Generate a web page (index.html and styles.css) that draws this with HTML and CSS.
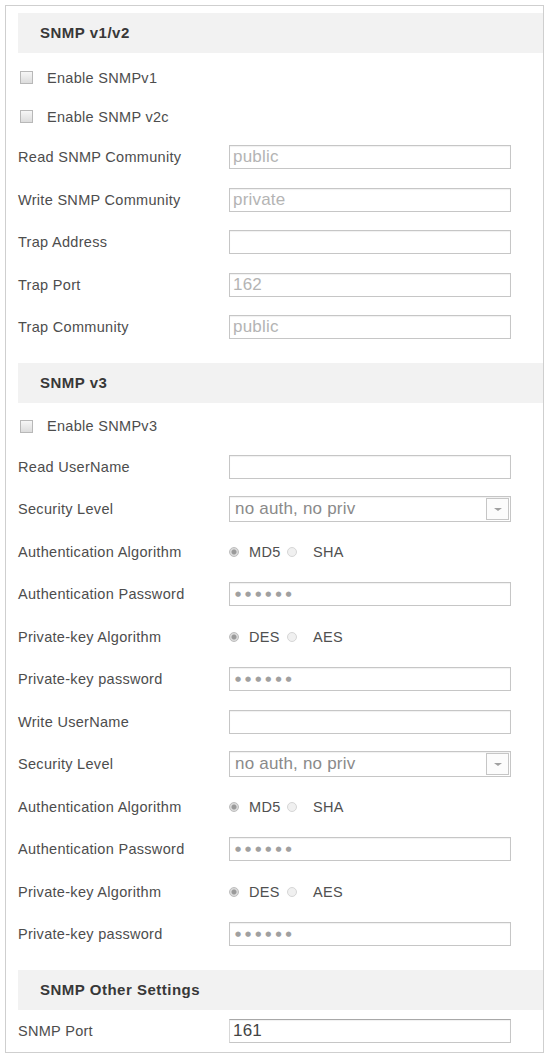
FILE: index.html
```html
<!DOCTYPE html>
<html lang="en">
<head>
    <meta charset="UTF-8">
    <meta name="viewport" content="width=device-width, initial-scale=1.0">
    <title>SNMP</title>
    <link rel="stylesheet" href="styles.css">
</head>
<body>
    <div class="panel">
        <div class="section-title first">SNMP v1/v2</div>
        <div class="check-row"><span class="checkbox"></span><span>Enable SNMPv1</span></div>
        <div class="check-row"><span class="checkbox"></span><span>Enable SNMP v2c</span></div>
        <div class="row"><label>Read SNMP Community</label><div class="field hint">public</div></div>
        <div class="row"><label>Write SNMP Community</label><div class="field hint">private</div></div>
        <div class="row"><label>Trap Address</label><div class="field"></div></div>
        <div class="row"><label>Trap Port</label><div class="field hint">162</div></div>
        <div class="row"><label>Trap Community</label><div class="field hint">public</div></div>

        <div class="section-title">SNMP v3</div>
        <div class="check-row"><span class="checkbox"></span><span>Enable SNMPv3</span></div>
        <div class="row"><label>Read UserName</label><div class="field"></div></div>
        <div class="row"><label>Security Level</label><div class="field select"><span>no auth, no priv</span><span class="arrow"></span></div></div>
        <div class="row"><label>Authentication Algorithm</label><div class="radios"><span class="option"><span class="radio on"></span>MD5</span><span class="option"><span class="radio"></span>SHA</span></div></div>
        <div class="row"><label>Authentication Password</label><div class="field dots">●●●●●●</div></div>
        <div class="row"><label>Private-key Algorithm</label><div class="radios"><span class="option"><span class="radio on"></span>DES</span><span class="option"><span class="radio"></span>AES</span></div></div>
        <div class="row"><label>Private-key password</label><div class="field dots">●●●●●●</div></div>
        <div class="row"><label>Write UserName</label><div class="field"></div></div>
        <div class="row"><label>Security Level</label><div class="field select"><span>no auth, no priv</span><span class="arrow"></span></div></div>
        <div class="row"><label>Authentication Algorithm</label><div class="radios"><span class="option"><span class="radio on"></span>MD5</span><span class="option"><span class="radio"></span>SHA</span></div></div>
        <div class="row"><label>Authentication Password</label><div class="field dots">●●●●●●</div></div>
        <div class="row"><label>Private-key Algorithm</label><div class="radios"><span class="option"><span class="radio on"></span>DES</span><span class="option"><span class="radio"></span>AES</span></div></div>
        <div class="row"><label>Private-key password</label><div class="field dots">●●●●●●</div></div>

        <div class="section-title flush">SNMP Other Settings</div>
        <div class="row last"><label>SNMP Port</label><div class="field value">161</div></div>
    </div>
</body>
</html>
```

FILE: styles.css
```css
body {
    margin: 0;
    font-family: "Liberation Sans", Arial, sans-serif;
    font-size: 14.5px;
    letter-spacing: 0.3px;
    color: #4d4d4d;
    background: #fff;
}

.panel {
    margin: 5px 0 0 5px;
    width: 539px;
    box-sizing: border-box;
    border: 1px solid #cfcfcf;
    padding: 7px 0 0 12px;
}

.section-title {
    height: 40px;
    line-height: 40px;
    background: #f2f2f2;
    padding-left: 22px;
    font-size: 15px;
    font-weight: bold;
    letter-spacing: 0.5px;
    color: #383838;
    margin-bottom: 4px;
}

.section-title.first {
    margin-bottom: 5px;
}

.row + .section-title {
    margin-top: 14px;
}

.section-title.flush {
    margin-bottom: 0;
}

.check-row {
    height: 39px;
    display: flex;
    align-items: center;
    gap: 14px;
    padding-left: 2px;
}

.checkbox {
    width: 11px;
    height: 11px;
    border: 1px solid #b8b8b8;
    background: linear-gradient(#f6f6f6, #dcdcdc);
}

.row {
    height: 42.5px;
    display: flex;
    align-items: center;
}

.row.last {
    height: 42px;
}

.row label {
    width: 211px;
    flex: none;
}

.field {
    width: 282px;
    height: 24px;
    box-sizing: border-box;
    border: 1px solid #c6c6c6;
    box-shadow: inset 0 1px 1px rgba(0, 0, 0, 0.06);
    padding: 0 3px;
    line-height: 22px;
    font-size: 17px;
    letter-spacing: 0.2px;
}

.hint {
    color: #b4b4b4;
}

.value {
    color: #444;
    border-top-color: #a8a8a8;
    border-left-color: #d8d8d8;
}

.dots {
    font-family: "DejaVu Sans", sans-serif;
    color: #a0a0a0;
    font-size: 7px;
    letter-spacing: 4px;
    padding-left: 5px;
}

.select {
    height: 26px;
    display: flex;
    align-items: center;
    justify-content: space-between;
    color: #8a8a8a;
    padding: 0 1px 0 5px;
}

.arrow {
    width: 23px;
    height: 22px;
    box-sizing: border-box;
    border: 1px solid #c6c6c6;
    background: #fcfcfc;
    position: relative;
}

.arrow::after {
    content: "";
    position: absolute;
    left: 7px;
    top: 9px;
    border-left: 4px solid transparent;
    border-right: 4px solid transparent;
    border-top: 3px solid #a0a0a0;
}

.radios {
    display: flex;
    align-items: center;
    color: #505050;
}

.option {
    display: flex;
    align-items: center;
}

.option:first-child {
    width: 58px;
    gap: 10px;
}

.option + .option {
    gap: 16px;
}

.radio {
    width: 8px;
    height: 8px;
    border-radius: 50%;
    border: 1px solid #d6d6d6;
    background: #f0f0f0;
}

.radio.on {
    background: radial-gradient(circle, #9a9a9a 0, #9a9a9a 2px, #dadada 3px);
    border-color: #bdbdbd;
}
```
